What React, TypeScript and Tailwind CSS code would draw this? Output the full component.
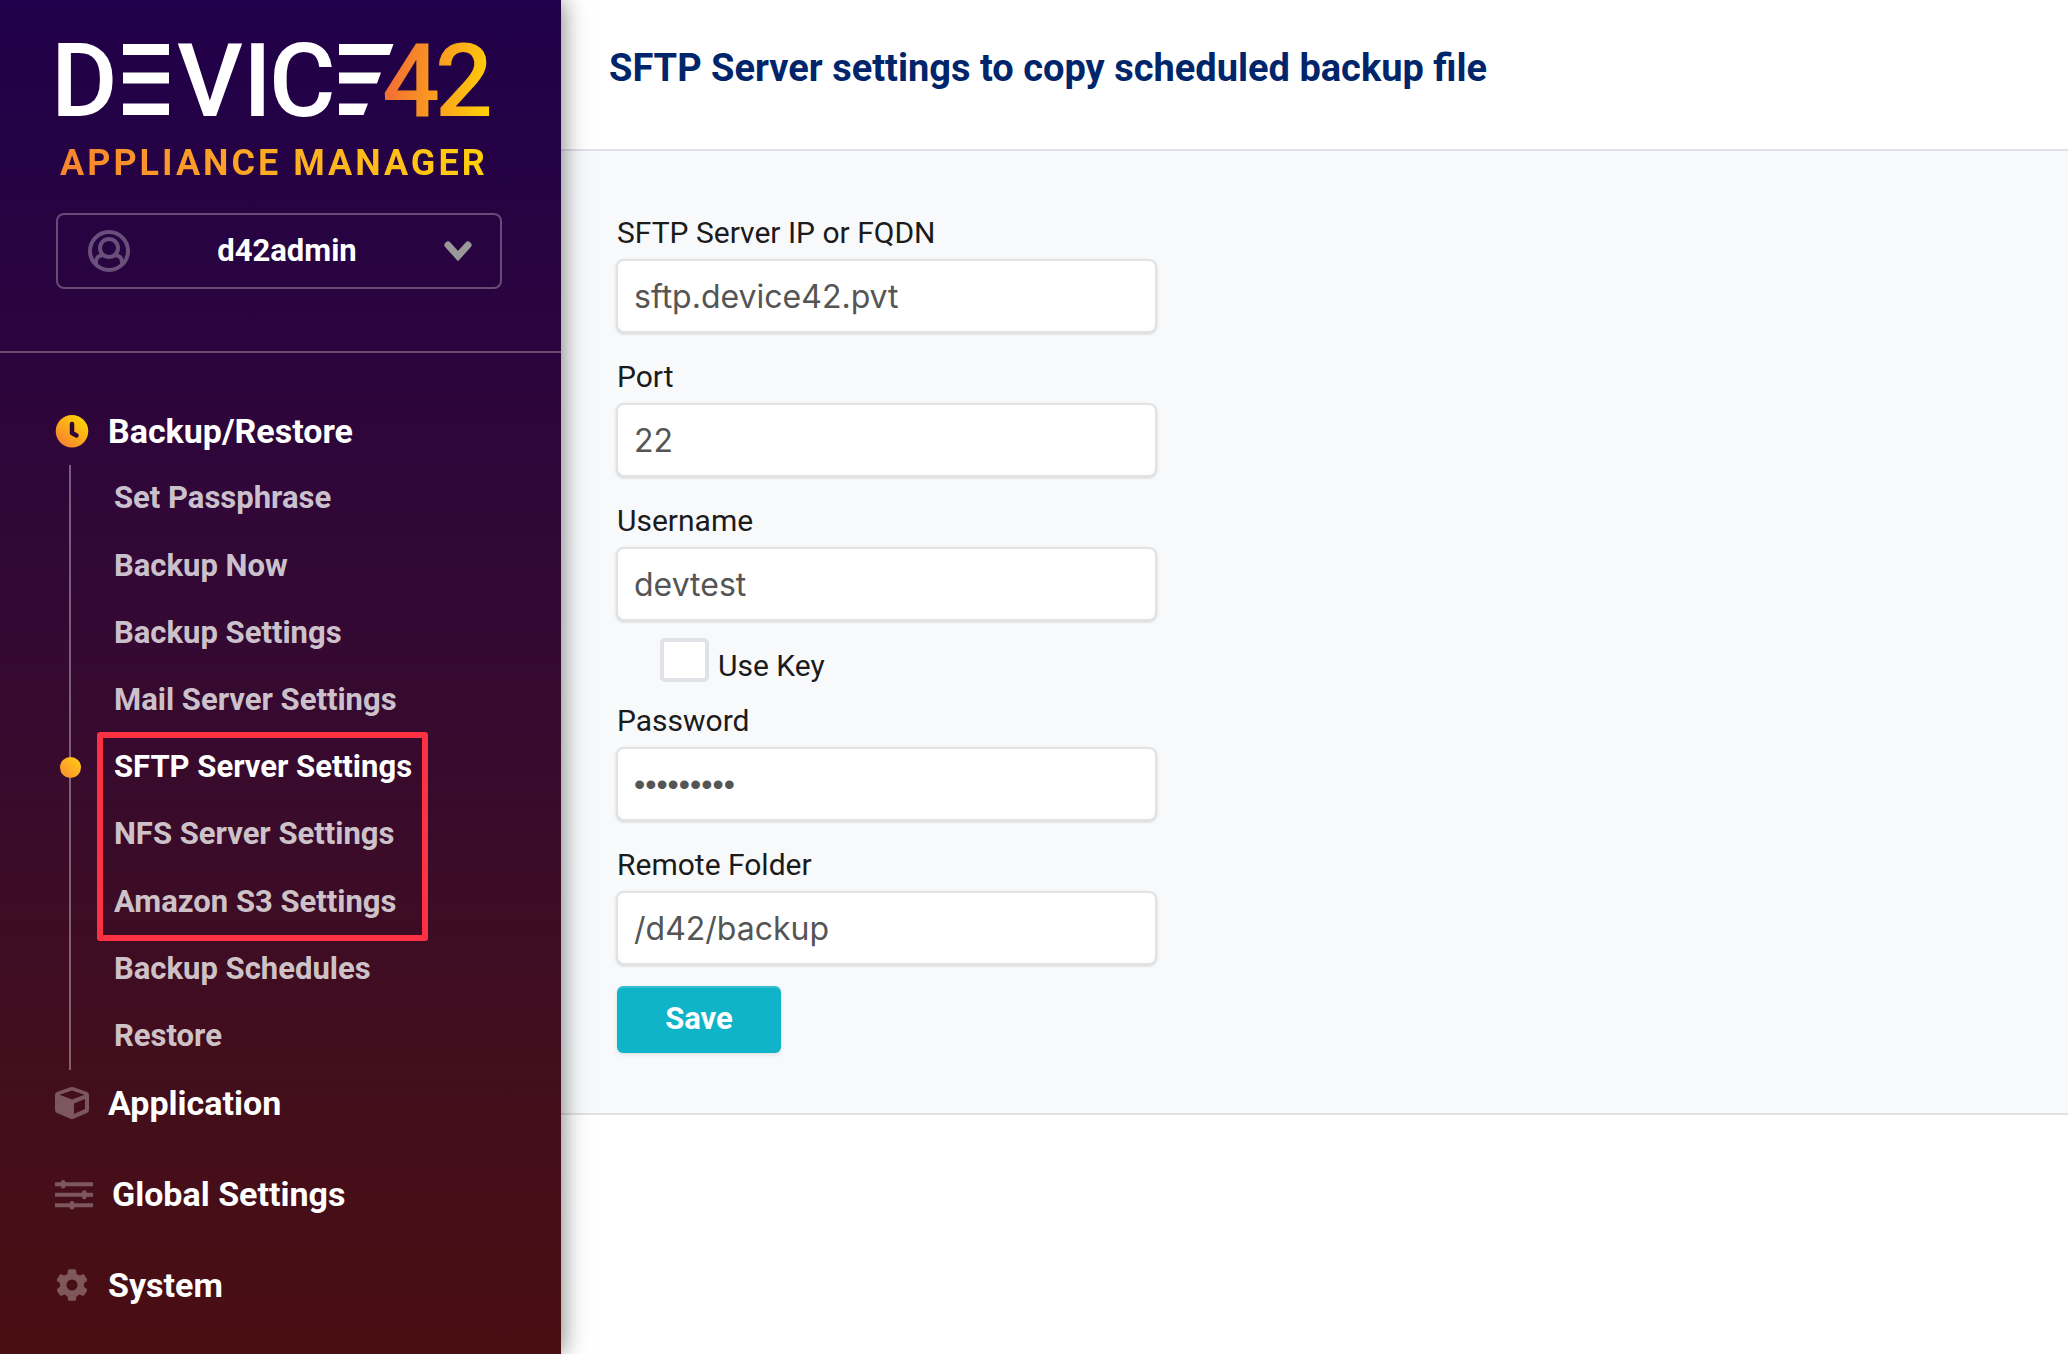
import type { ReactNode } from "react";

const BACKUP_LINKS = [
  "Set Passphrase",
  "Backup Now",
  "Backup Settings",
  "Mail Server Settings",
  "SFTP Server Settings",
  "NFS Server Settings",
  "Amazon S3 Settings",
  "Backup Schedules",
  "Restore",
];
const ACTIVE_LINK = "SFTP Server Settings";

function Logo() {
  return (
    <svg viewBox="46 14 454 129" className="-ml-2.5 h-[129px] w-[454px]" role="img" aria-label="DEVICE42">
      <defs>
        <linearGradient id="logo-gradient" gradientUnits="userSpaceOnUse" x1="388" y1="90" x2="488" y2="105">
          <stop offset="0" stopColor="#f47033" />
          <stop offset="1" stopColor="#ffd008" />
        </linearGradient>
      </defs>
      <g fill="#fff" className="font-['Roboto',sans-serif] text-[102px] font-medium">
        <text x="51" y="116">D</text>
        <path d="M123 44h46v11h-46zM123 72.500h46v11h-46zM123 103.500h46v11.500h-46z" />
        <text x="177" y="116">V</text>
        <text x="243" y="116">I</text>
        <text x="269" y="116">C</text>
        <path d="M339 44h54.500l-4 11H339zM339 72.500h42l-4 11h-38zM339 103.500h29l-4.500 11.500H339z" />
      </g>
      <g fill="url(#logo-gradient)" className="font-['Roboto',sans-serif] text-[102px] font-medium">
        <text x="382" y="116">4</text>
        <text x="435" y="116">2</text>
      </g>
    </svg>
  );
}

function UserIcon() {
  return (
    <svg viewBox="0 0 42 42" className="size-[42px] opacity-30" fill="none" stroke="#fff" strokeWidth="4" aria-hidden="true">
      <circle cx="21" cy="21" r="19" />
      <circle cx="21" cy="18" r="9" />
      <path d="M8 34v-2c0-4 2.500-6.500 6.500-6.500M34 34v-2c0-4-2.500-6.500-6.500-6.500" />
    </svg>
  );
}

function ClockIcon() {
  return (
    <svg viewBox="0 0 34 34" className="size-[34px]" aria-hidden="true">
      <defs>
        <linearGradient id="clock-gradient" x1="0.1" y1="0.9" x2="0.8" y2="0.1">
          <stop offset="0" stopColor="#f78030" />
          <stop offset="1" stopColor="#ffd008" />
        </linearGradient>
      </defs>
      <circle cx="17" cy="16.250" r="16.250" fill="url(#clock-gradient)" />
      <path d="M17 9v9l4.500 2.500" fill="none" stroke="#2e0636" strokeWidth="4.500" strokeLinecap="round" strokeLinejoin="round" />
    </svg>
  );
}

function CubeIcon() {
  return (
    <svg viewBox="0 1 34 34" className="size-[34px] opacity-30" fill="#fff" fillRule="evenodd" aria-hidden="true">
      <path d="M15.500 1.300q1.500-.600 3 0L32 6q2 .800 2 3V24q0 2-2 3L18.500 32.800q-1.500.600-3 0L2 27q-2-1-2-3V9q0-2.200 2-3zM4.500 8.800 17 13.500l12.500-4.700L17 4.500zM19 17.500V28l11-5V13z" />
    </svg>
  );
}

function SlidersIcon() {
  return (
    <svg viewBox="0 0 38 30" className="h-[30px] w-[38px] opacity-30" fill="#fff" aria-hidden="true">
      <path d="M0 2.200h6V2q0-2 2.200-2t2.200 2v.200H38v4H10.400v.300q0 2-2.200 2T6 6.500v-.300H0zM0 12.800h27v-.500q0-2 2.300-2t2.300 2v.500H38v4h-6.400v.500q0 2-2.300 2t-2.300-2v-.500H0zM0 23.200h14.700v-.300q0-2 2.300-2t2.300 2v.300H38v4H19.300v.300q0 2-2.300 2t-2.300-2v-.300H0z" />
    </svg>
  );
}

function GearIcon() {
  return (
    <svg viewBox="0 1 34 34" className="size-[34px] opacity-30" fill="#fff" aria-hidden="true">
      <circle cx="17" cy="17" r="8.750" fill="none" stroke="#fff" strokeWidth="6.500" />
      {[0, 60, 120, 180, 240, 300].map((angle) => (
        <path key={angle} transform={`rotate(${angle} 17 17)`} d="M12 9l1-6.500q.200-1.300 1.500-1.300h5q1.300 0 1.500 1.300l1 6.500q-5-2.500-10 0z" />
      ))}
    </svg>
  );
}

function NavHeading({ icon, children }: { icon: ReactNode; children: ReactNode }) {
  return (
    <a href="#" className="flex h-[67px] items-center gap-[19px] pl-[55px] text-[34px] font-bold text-white">
      {icon}
      <span>{children}</span>
    </a>
  );
}

function Sidebar() {
  return (
    <aside className="z-10 w-[561px] shrink-0 bg-[linear-gradient(180deg,#20004a_0%,#2c053c_28%,#370a2e_55%,#430e1c_80%,#490e12_100%)] shadow-[0_0_24px_rgba(0,0,0,0.55)]">
      <div className="border-b-2 border-[#6a4a70] px-14 pt-3.5 pb-[62px]">
        <Logo />
        <p className="ml-1 w-fit bg-gradient-to-r from-[#f7852d] to-[#ffd008] bg-clip-text text-[36px] leading-10 font-bold tracking-[3px] text-transparent">
          APPLIANCE MANAGER
        </p>
        <button type="button" className="mt-[30px] flex h-[76px] w-[446px] items-center rounded-lg border-2 border-[#6a4a76] pr-7 pl-[30px] text-[31px] font-bold text-white">
          <UserIcon />
          <span className="flex-1 text-center">d42admin</span>
          <svg viewBox="0 0 28 20" className="h-5 w-7" aria-hidden="true">
            <path d="M4 4l10 11L24 4" fill="none" stroke="#999" strokeWidth="7" strokeLinecap="round" />
          </svg>
        </button>
      </div>
      <nav className="pt-[45px]">
        <NavHeading icon={<ClockIcon />}>Backup/Restore</NavHeading>
        <ul className="relative ml-[69px] flex h-[605px] flex-col border-l-2 border-white/35 text-[31px] font-bold">
          {BACKUP_LINKS.map((name) => (
            <li key={name} className="relative flex flex-1 items-center pl-[43px]">
              {name === ACTIVE_LINK && (
                <span className="absolute -left-[11px] size-[21px] rounded-full bg-gradient-to-tr from-[#f78a2c] to-[#ffd008]" />
              )}
              <a href="#" className={name === ACTIVE_LINK ? "text-white" : "text-white/77"}>
                {name}
              </a>
            </li>
          ))}
          <li aria-hidden="true" className="pointer-events-none absolute top-[267px] left-[26px] h-[209px] w-[331px] rounded-[3px] border-6 border-[#fc3243]" />
        </ul>
        <div className="flex flex-col gap-6 pb-8">
          <NavHeading icon={<CubeIcon />}>Application</NavHeading>
          <NavHeading icon={<SlidersIcon />}>Global Settings</NavHeading>
          <NavHeading icon={<GearIcon />}>System</NavHeading>
        </div>
      </nav>
    </aside>
  );
}

function Field({ id, label, value, type = "text" }: { id: string; label: string; value: string; type?: string }) {
  const face = type === "password" ? "font-['Liberation_Sans',sans-serif]" : "font-['Inter',sans-serif]";
  return (
    <div className="flex flex-col gap-2">
      <label htmlFor={id} className="leading-9">
        {label}
      </label>
      <input
        id={id}
        type={type}
        defaultValue={value}
        className={`-ml-px h-[74px] w-[541px] rounded-lg border-2 border-[#e2e2e2] bg-white px-4 text-[32px] text-[#555] shadow-[0_1px_3px_rgba(0,0,0,0.16)] ${face}`}
      />
    </div>
  );
}

export default function App() {
  return (
    <div className="flex min-h-screen bg-white font-['Roboto',sans-serif]">
      <Sidebar />
      <main className="min-w-0 flex-1">
        <header className="flex h-[151px] items-center border-b-2 border-[#dfe0e8] px-12 pb-3">
          <h1 className="text-[38px] font-bold text-[#01256b]">SFTP Server settings to copy scheduled backup file</h1>
        </header>
        <form className="flex flex-col items-start border-b-2 border-[#e0e2e6] bg-[#f8f9fb] px-14 pt-16 pb-[60px] text-[30px] text-[#1b1b1b]">
          <div className="flex flex-col gap-[26px]">
            <Field id="host" label="SFTP Server IP or FQDN" value="sftp.device42.pvt" />
            <Field id="port" label="Port" value="22" />
            <Field id="username" label="Username" value="devtest" />
          </div>
          <div className="mt-[17px] mb-[19px] ml-[43px] flex h-[46px] gap-[9px]">
            <input id="use-key" type="checkbox" className="h-11 w-[49px] appearance-none rounded-[5px] border-4 border-[#e0e2e8] bg-white" />
            <label htmlFor="use-key" className="self-end leading-9">
              Use Key
            </label>
          </div>
          <div className="flex flex-col gap-[26px]">
            <Field id="password" label="Password" value="secretkey" type="password" />
            <Field id="folder" label="Remote Folder" value="/d42/backup" />
          </div>
          <button type="submit" className="mt-[21px] h-[67px] w-[164px] rounded-md bg-[#10b4c8] text-[31px] font-bold text-white shadow-[inset_0_2px_0_rgba(255,255,255,0.15),0_2px_4px_rgba(0,0,0,0.1)]">
            Save
          </button>
        </form>
      </main>
    </div>
  );
}
